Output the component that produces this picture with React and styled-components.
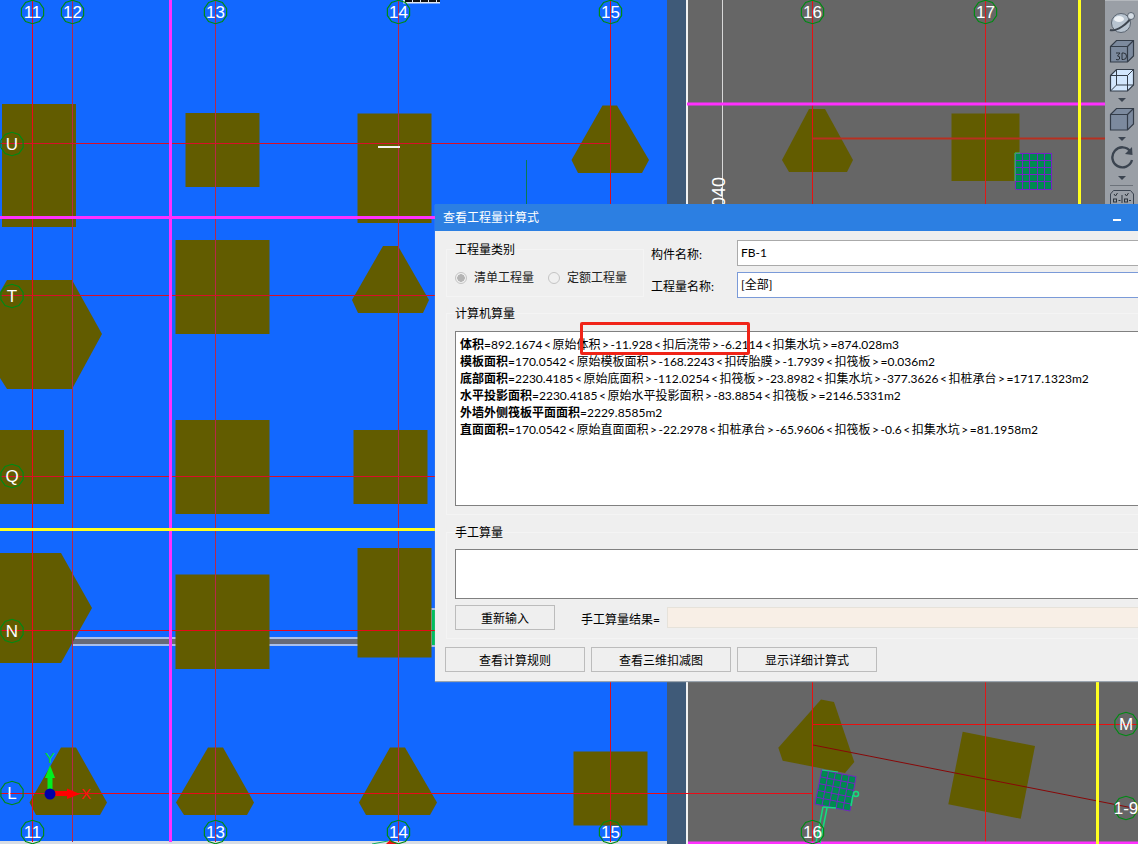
import React from "react";
import styled, { createGlobalStyle } from "styled-components";

const GlobalStyle = createGlobalStyle`
  html, body {
    margin: 0;
    padding: 0;
    background: #666666;
  }
`;

const uiFont = `Lato, "Noto Sans CJK SC", "Liberation Sans", sans-serif`;

// ---- drawing data, plan coordinates are screen pixels ----
const rects = [
  [2, 104, 74, 123],
  [185.5, 113, 74, 74],
  [357.5, 113.5, 74, 109.5],
  [175.5, 240, 94, 94],
  [0, 430, 64, 74],
  [175.5, 420, 94, 94],
  [353.5, 430, 74, 74],
  [175.5, 574.5, 94, 94.5],
  [357.5, 548, 74, 109.5],
  [573.5, 751.5, 74, 74],
  [951.5, 113.5, 68, 67.5],
];

const polys = [
  "383,246 398,246 429,300 423,313 358,313 352,300",
  "7,280 72,280 102,334 72,389 7,389 0,378 0,292",
  "0,553 61,553 92,608 61,663 0,663",
  "61,747.5 76,747.5 107,802.5 100,815 36,815 29.5,802.5",
  "208,747.5 223,747.5 254,802.5 247,815 184,815 176,802.5",
  "390,747.5 405,747.5 437,802.5 430,815 366,815 359,802.5",
  "602.5,105.5 617,105.5 649,160 642,173 578,173 571.5,160",
  "809,109 825,109 853,160 847,172 789,172 782,160",
  "821,699.5 834,702 854.3,762 845,773 782.7,760.7 778.3,747.7",
  "962.7,731.7 1035,746 1020.7,818.7 948.3,804.3",
];

// x1, y1, x2, y2, colour, width
const lines = [
  [32.5, 0, 32.5, 842, "#f00818", 1],
  [72.5, 0, 72.5, 842, "#b82848", 1],
  [215.5, 0, 215.5, 842, "#b82848", 1],
  [398.5, 0, 398.5, 842, "#b82848", 1],
  [610.5, 0, 610.5, 842, "#d81020", 1],
  [812.5, 0, 812.5, 844, "#e81010", 1],
  [985.5, 0, 985.5, 844, "#e01818", 1],
  [0, 143.5, 610, 143.5, "#d81028", 1],
  [812, 138.5, 1105, 138.5, "#b83020", 2],
  [0, 295.5, 435, 295.5, "#d81028", 1],
  [0, 476.5, 435, 476.5, "#d81028", 1],
  [0, 630.5, 435, 630.5, "#e80818", 1],
  [0, 793.5, 812, 793.5, "#e80c18", 1],
  [812, 724.5, 1138, 724.5, "#e81010", 1],
  [813, 745, 1138, 809, "#880808", 1],
  [526.5, 160, 526.5, 204, "#0a7a50", 1],
  [722.5, 0, 722.5, 204, "#d8d8d8", 1],
  [170.5, 0, 170.5, 842, "#ff30ff", 3],
  [0, 217.5, 435, 217.5, "#ff30ff", 3],
  [687, 104, 1105, 104, "#ff30ff", 3],
  [688, 843, 1138, 843, "#ff30ff", 3],
  [0, 529.5, 435, 529.5, "#ffff20", 3],
  [1079.5, 0, 1079.5, 204, "#ffff20", 3],
  [1097.5, 682, 1097.5, 844, "#ffff20", 3],
  [378, 147, 400, 147, "#f4f4f0", 2],
];

const axes = [
  ["11", 32.5, 12],
  ["12", 72.5, 12],
  ["13", 215.5, 12],
  ["14", 398.5, 12],
  ["15", 610.5, 12],
  ["16", 812.5, 12],
  ["17", 985.5, 12],
  ["U", 12, 144],
  ["T", 12, 296],
  ["Q", 12, 476],
  ["N", 12, 631],
  ["L", 12, 793],
  ["11", 32.5, 832],
  ["13", 215.5, 832],
  ["14", 398.5, 832],
  ["15", 610.5, 832],
  ["16", 812.5, 832],
  ["M", 1126, 724],
  ["1-9", 1126, 808],
];

const tenGon = (cx, cy, r) =>
  Array.from({ length: 10 }, (_, i) => {
    const a = (Math.PI / 5) * i + Math.PI / 10;
    return `${(cx + r * Math.cos(a)).toFixed(1)},${(cy + r * Math.sin(a)).toFixed(1)}`;
  }).join(" ");

// bilinear point inside a four-cornered slab, for the rebar meshes
const slabPoint = (c, u, v) => {
  const top = [c[0][0] + (c[1][0] - c[0][0]) * u, c[0][1] + (c[1][1] - c[0][1]) * u];
  const bot = [c[3][0] + (c[2][0] - c[3][0]) * u, c[3][1] + (c[2][1] - c[3][1]) * u];
  return [top[0] + (bot[0] - top[0]) * v, top[1] + (bot[1] - top[1]) * v];
};

function Mesh({ corners, crisp }) {
  const steps = [0, 0.2, 0.4, 0.6, 0.8, 1];
  const rendering = crisp ? "crispEdges" : "auto";
  return (
    <g shapeRendering={rendering}>
      <polygon points={corners.map((p) => p.join(",")).join(" ")} fill="#008a50" />
      {steps.map((u) => {
        const a = slabPoint(corners, u, 0);
        const b = slabPoint(corners, u, 1);
        return <line key={"c" + u} x1={a[0]} y1={a[1]} x2={b[0]} y2={b[1]} stroke="#7424c4" strokeWidth="1" />;
      })}
      {steps.map((v) => {
        const a = slabPoint(corners, 0, v);
        const b = slabPoint(corners, 1, v);
        return <line key={"r" + v} x1={a[0]} y1={a[1]} x2={b[0]} y2={b[1]} stroke="#7424c4" strokeWidth="1" />;
      })}
    </g>
  );
}

function CadDrawing() {
  return (
    <Plan viewBox="0 0 1138 844" width="1138" height="844">
      <rect x="0" y="0" width="667" height="841" fill="#1268ff" />
      <rect x="667" y="0" width="19" height="844" fill="#3f5a78" />
      <rect x="0" y="841" width="667" height="3" fill="#d8dde4" />
      <rect x="688" y="0" width="450" height="844" fill="#666666" />
      <rect x="686" y="0" width="2" height="844" fill="#f2f2f2" />

      {/* strip beam along row N */}
      <rect x="72" y="637" width="363" height="9" fill="#a8bfec" />
      <rect x="72" y="639" width="363" height="5" fill="#666a78" />
      <rect x="431" y="608" width="4" height="39" fill="#a8bfec" />
      <rect x="432" y="610" width="3" height="35" fill="#00c060" />

      {rects.map((r, i) => (
        <rect key={i} x={r[0]} y={r[1]} width={r[2]} height={r[3]} fill="#625c00" />
      ))}
      {polys.map((p, i) => (
        <polygon key={i} points={p} fill="#625c00" />
      ))}

      {lines.map((l, i) => (
        <line key={i} x1={l[0]} y1={l[1]} x2={l[2]} y2={l[3]} stroke={l[4]} strokeWidth={l[5]} />
      ))}

      <Mesh crisp corners={[[1015.5, 153.5], [1051.5, 153.5], [1051.5, 189], [1015.5, 189]]} />
      <line x1="1015" y1="153" x2="1015" y2="181" stroke="#20d070" strokeWidth="1" />
      <line x1="1015" y1="153" x2="1020" y2="153" stroke="#20d070" strokeWidth="1" />

      <Mesh corners={[[821.7, 770], [856, 776.7], [850, 811], [815, 804]]} />
      <polyline points="822,770 838,772" fill="none" stroke="#10e080" strokeWidth="1" />
      <polyline points="853,795 851,806" fill="none" stroke="#10e080" strokeWidth="1.5" />
      <circle cx="856" cy="794" r="2.5" fill="none" stroke="#10e080" strokeWidth="1.5" />
      <polyline points="823,807 836,808" fill="none" stroke="#10e080" strokeWidth="1.5" />
      <polyline points="823,807 816,843" fill="none" stroke="#10e080" strokeWidth="1.5" />
      <polyline points="827,808 820,843" fill="none" stroke="#10e080" strokeWidth="1.5" />

      {/* bit of pile cap poking in at the bottom edge */}
      <polyline points="372,844 388,841" fill="none" stroke="#10b060" strokeWidth="1" />
      <polygon points="386,844 390,840 398,844" fill="#f01010" />
      {/* dashed object at the top edge */}
      <rect x="403" y="0" width="37" height="3.5" fill="#dfe6f0" />
      <line x1="405" y1="1" x2="440" y2="1" stroke="#101010" strokeWidth="2" strokeDasharray="7 1" />

      {axes.map(([label, x, y], i) => (
        <g key={i}>
          <polygon points={tenGon(x, y, 11.7)} fill="none" stroke="#008a14" strokeWidth="1.2" />
          <AxisLabel x={x} y={y + 6}>
            {label}
          </AxisLabel>
        </g>
      ))}

      <AxisLabel x="725" y="192" transform="rotate(-90 725 192)" $size={18}>
        040
      </AxisLabel>

      {/* UCS marker */}
      <rect x="47.5" y="774" width="5" height="18" fill="#00f020" />
      <polygon points="50,765 55,778 45,778" fill="#00f020" />
      <rect x="52" y="791" width="17" height="5" fill="#ff0000" />
      <polygon points="80,794 67,788.5 67,799" fill="#ff0000" />
      <circle cx="50" cy="794" r="5.5" fill="#0000a8" />
      <UcsLabel x="50" y="763" fill="#00e030">
        Y
      </UcsLabel>
      <UcsLabel x="86" y="799" fill="#ff1010">
        X
      </UcsLabel>
    </Plan>
  );
}

function ToolIcons() {
  return (
    <Toolbar>
      <ToolIcon width="28" height="24" viewBox="0 0 28 24" $top={9}>
        <circle cx="13" cy="13" r="9.5" fill="#b8c4d0" stroke="#5a6470" />
        <ellipse cx="11" cy="9" rx="5" ry="3" fill="#eef2f6" />
        <path d="M2 20 C8 22 20 14 24 6" fill="none" stroke="#3e4650" strokeWidth="2" />
        <circle cx="23" cy="6" r="3.5" fill="#d4dce4" stroke="#5a6470" />
      </ToolIcon>
      <ToolIcon width="26" height="24" viewBox="0 0 26 24" $top={5}>
        <path d="M1.5 7.5 L7.5 1.5 H24.5 V17 L18.5 23 H1.5 Z" fill="#7c8a9e" stroke="#333c48" strokeWidth="1.2" />
        <path d="M1.5 7.5 H18.5 V23 M18.5 7.5 L24.5 1.5" fill="none" stroke="#333c48" strokeWidth="1.2" />
        <path d="M7 14 h4 l-2.5 3 q3 0 2 3 q-1 1.500 -3.500 0.500 M13 14 v6.500 h1.500 q3 0 3 -3.250 q0 -3.250 -3 -3.250 h-1.500" fill="none" stroke="#20262e" strokeWidth="0.9" />
      </ToolIcon>
      <ToolIcon width="26" height="24" viewBox="0 0 26 24" $top={5}>
        <path d="M1.5 7.5 L7.500 1.500 H24.500 V17 L18.500 23 H1.500 Z" fill="#d2e6fc" stroke="#333c48" strokeWidth="1.2" />
        <path d="M1.500 7.500 H18.500 V23 M18.500 7.500 L24.500 1.500 M7.500 1.500 V17 H24.500 M7.500 17 L1.500 23" fill="none" stroke="#333c48" strokeWidth="1" />
      </ToolIcon>
      <Caret $top={6} />
      <ToolIcon width="26" height="24" viewBox="0 0 26 24" $top={5}>
        <path d="M1.500 7.500 L7.500 1.500 H24.500 V17 L18.500 23 H1.500 Z" fill="#7c8a9e" stroke="#333c48" strokeWidth="1.2" />
        <path d="M1.500 7.500 H18.500 V23 M18.500 7.500 L24.500 1.500" fill="none" stroke="#333c48" strokeWidth="1.2" />
      </ToolIcon>
      <Caret $top={6} />
      <ToolIcon width="26" height="24" viewBox="0 0 26 24" $top={5}>
        <path d="M21.500 5.500 A10 10 0 1 0 23 14" fill="none" stroke="#3b4450" strokeWidth="2.4" />
        <polygon points="23,1 23.500,9 16,8" fill="#3b4450" />
      </ToolIcon>
      <Caret $top={6} />
      <Divider />
      <ToolIcon width="24" height="14" viewBox="0 0 24 14" $top={4}>
        <path d="M0.500 14 V4 L3.500 0.500 H20.500 L23.500 4 V14" fill="#9aa0a8" stroke="#3b4450" />
        <path d="M4 4 l1.500 2 l2 -3 M15 4 l1.500 2 l2 -3" fill="none" stroke="#2b323a" />
        <rect x="3.500" y="9" width="3" height="3" fill="none" stroke="#2b323a" />
        <rect x="14.500" y="9" width="3" height="3" fill="none" stroke="#2b323a" />
        <path d="M8.500 10.500 h2 M19 10.500 h2 M12 5 v8" stroke="#2b323a" />
      </ToolIcon>
    </Toolbar>
  );
}

const formulas = [
  ["体积", "=892.1674<原始体积>-11.928<扣后浇带>-6.2114<扣集水坑>=874.028m3"],
  ["模板面积", "=170.0542<原始模板面积>-168.2243<扣砖胎膜>-1.7939<扣筏板>=0.036m2"],
  ["底部面积", "=2230.4185<原始底面积>-112.0254<扣筏板>-23.8982<扣集水坑>-377.3626<扣桩承台>=1717.1323m2"],
  ["水平投影面积", "=2230.4185<原始水平投影面积>-83.8854<扣筏板>=2146.5331m2"],
  ["外墙外侧筏板平面面积", "=2229.8585m2"],
  ["直面面积", "=170.0542<原始直面面积>-22.2978<扣桩承台>-65.9606<扣筏板>-0.6<扣集水坑>=81.1958m2"],
];

// the angle brackets sit wider in the original font
const withAngles = (text) =>
  text.split(/([<>])/).map((part, i) => (part === "<" || part === ">" ? <Angle key={i}>{part}</Angle> : part));

export default function App() {
  return (
    <Page>
      <GlobalStyle />
      <CadDrawing />
      <ToolIcons />
      <Dialog>
        <TitleBar>
          <span>查看工程量计算式</span>
          <Minimize />
        </TitleBar>
        <Body>
          <TopRow>
            <TypeGroup>
              <legend>工程量类别</legend>
              <RadioRow>
                <RadioItem>
                  <RadioDot $checked />
                  清单工程量
                </RadioItem>
                <RadioItem>
                  <RadioDot />
                  定额工程量
                </RadioItem>
              </RadioRow>
            </TypeGroup>
            <NameFields>
              <FieldRow>
                <FieldLabel>构件名称:</FieldLabel>
                <TextField>FB-1</TextField>
              </FieldRow>
              <FieldRow>
                <FieldLabel>工程量名称:</FieldLabel>
                <TextField $focused>[全部]</TextField>
              </FieldRow>
            </NameFields>
          </TopRow>

          <Section>
            <legend>计算机算量</legend>
            <FormulaBox $height={175}>
              {formulas.map(([name, text]) => (
                <FormulaLine key={name}>
                  <b>{name}</b>
                  {withAngles(text)}
                </FormulaLine>
              ))}
            </FormulaBox>
          </Section>

          <Section $gap={9} $top={9}>
            <legend>手工算量</legend>
            <FormulaBox $height={50} />
            <ResultRow>
              <PushButton $width={100}>重新输入</PushButton>
              <ResultLabel>手工算量结果=</ResultLabel>
              <ResultField />
            </ResultRow>
          </Section>

          <ButtonRow>
            <PushButton $width={140}>查看计算规则</PushButton>
            <PushButton $width={140}>查看三维扣减图</PushButton>
            <PushButton $width={140}>显示详细计算式</PushButton>
          </ButtonRow>
        </Body>
        <RedMark />
      </Dialog>
    </Page>
  );
}

const Page = styled.div`
  position: relative;
  width: 1138px;
  height: 844px;
  overflow: hidden;
`;

const Plan = styled.svg`
  display: block;
`;

const AxisLabel = styled.text`
  font-family: "Liberation Sans", sans-serif;
  font-size: ${(p) => p.$size || 17}px;
  fill: #ffffff;
  text-anchor: middle;
`;

const UcsLabel = styled.text`
  font-family: "Liberation Sans", sans-serif;
  font-size: 15px;
  text-anchor: middle;
`;

const Toolbar = styled.div`
  position: absolute;
  top: 0;
  left: 1105px;
  width: 33px;
  height: 204px;
  background: #9a9fa6;
  border-top: 1px solid #b4b8bd;
  box-sizing: border-box;
  display: flex;
  flex-direction: column;
  align-items: center;
  overflow: hidden;
`;

const ToolIcon = styled.svg`
  display: block;
  flex: none;
  margin-top: ${(p) => p.$top}px;
`;

const Caret = styled.div`
  flex: none;
  width: 0;
  height: 0;
  margin-top: ${(p) => p.$top}px;
  border-left: 4px solid transparent;
  border-right: 4px solid transparent;
  border-top: 4px solid #3b4450;
`;

const Divider = styled.div`
  flex: none;
  width: 23px;
  height: 1px;
  margin-top: 5px;
  background: #6c727a;
`;

const Dialog = styled.div`
  position: absolute;
  top: 204px;
  left: 435px;
  width: 800px;
  background: #efefef;
  box-shadow: 0 1px 1px #9aa4ae;
  font-family: ${uiFont};
  font-size: 12px;
  color: #000000;
`;

const TitleBar = styled.div`
  height: 27px;
  box-sizing: border-box;
  padding: 0 0 0 8px;
  background: #2c7fe2;
  color: #ffffff;
  display: flex;
  align-items: center;
  line-height: 27px;
`;

const Minimize = styled.i`
  position: absolute;
  top: 15px;
  left: 678px;
  width: 8px;
  height: 2px;
  background: #ffffff;
`;

const Body = styled.div`
  padding: 9px 11px 9px 11px;
  display: flex;
  flex-direction: column;
`;

const TopRow = styled.div`
  display: flex;
  align-items: flex-start;
`;

const groupBox = `
  margin: 0;
  box-sizing: border-box;
  border: 1px solid #f4f4f4;
  min-width: 0;
  legend {
    padding: 0;
    line-height: 18px;
    height: 16px;
    font-size: 12px;
  }
`;

const TypeGroup = styled.fieldset`
  ${groupBox}
  flex: none;
  width: 198px;
  height: 56px;
  margin-top: 1px;
  padding: 0 8px;
`;

const RadioRow = styled.div`
  display: flex;
  padding: 13px 0 0 0;
`;

const RadioItem = styled.label`
  flex: none;
  width: 93px;
  display: flex;
  align-items: center;
  gap: 7px;
  color: #222222;
  line-height: 16px;
`;

const RadioDot = styled.span`
  flex: none;
  box-sizing: border-box;
  width: 12px;
  height: 12px;
  margin-top: -1px;
  border-radius: 50%;
  border: 1px solid #c4c4c4;
  background: ${(p) => (p.$checked ? "radial-gradient(circle, #b4b4b4 0 3.5px, #f0f0f0 4px)" : "#f0f0f0")};
`;

const NameFields = styled.div`
  flex: 1;
  margin-left: 7px;
  display: flex;
  flex-direction: column;
  gap: 6px;
`;

const FieldRow = styled.div`
  display: flex;
  align-items: center;
`;

const FieldLabel = styled.div`
  flex: none;
  width: 86px;
`;

const TextField = styled.div`
  flex: 1;
  height: 26px;
  box-sizing: border-box;
  padding-left: 3px;
  line-height: 24px;
  background: #ffffff;
  border: 1px solid ${(p) => (p.$focused ? "#7a9ad8" : "#aaaaaa")};
`;

const Section = styled.fieldset`
  ${groupBox}
  margin-top: ${(p) => p.$gap || 7}px;
  padding: ${(p) => p.$top || 10}px 8px 8px;
`;

const FormulaBox = styled.div`
  height: ${(p) => p.$height}px;
  box-sizing: border-box;
  padding: 4px 4px;
  background: #ffffff;
  border: 1px solid #808080;
`;

const FormulaLine = styled.div`
  height: 17px;
  line-height: 17px;
  white-space: nowrap;
`;

const Angle = styled.span`
  padding: 0 1.5px;
`;

const ResultRow = styled.div`
  display: flex;
  align-items: center;
  margin-top: 6px;
`;

const PushButton = styled.div`
  flex: none;
  width: ${(p) => p.$width}px;
  height: 25px;
  box-sizing: border-box;
  border: 1px solid #bcbcbc;
  text-align: center;
  line-height: 25px;
`;

const ResultLabel = styled.div`
  flex: none;
  margin-left: 26px;
  width: 86px;
  padding-top: 1px;
`;

const ResultField = styled.div`
  flex: 1;
  height: 21px;
  box-sizing: border-box;
  background: #f8efe6;
  border: 1px solid #e6e2da;
`;

const ButtonRow = styled.div`
  display: flex;
  gap: 6px;
  margin-top: 8px;
  margin-left: -1px;
`;

const RedMark = styled.div`
  position: absolute;
  top: 118px;
  left: 145px;
  width: 170px;
  height: 33px;
  box-sizing: border-box;
  border: 3px solid #f02418;
  border-radius: 2px;
`;
